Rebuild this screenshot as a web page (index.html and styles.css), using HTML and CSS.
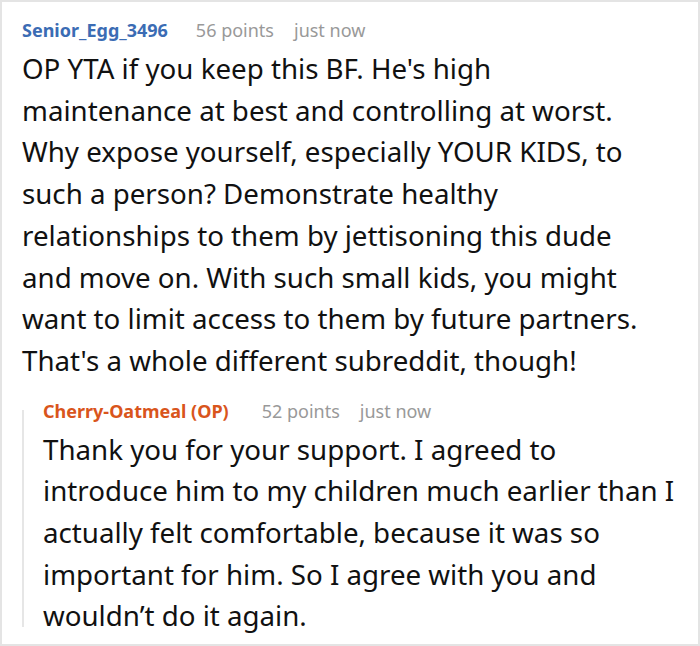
FILE: index.html
```html
<!DOCTYPE html>
<html lang="en">
<head>
    <meta charset="UTF-8">
    <meta name="viewport" content="width=device-width, initial-scale=1.0">
    <title>Comment thread</title>
    <link rel="stylesheet" href="styles.css">
</head>
<body>
<div class="thread">
    <div class="comment">
        <div class="comment-meta">
            <span class="author">Senior_Egg_3496</span>
            <span class="score">56 points</span>
            <span class="time">just now</span>
        </div>
        <p class="comment-body top-level">OP YTA if you keep this BF. He's high maintenance at best and controlling at worst. Why expose yourself, especially YOUR KIDS, to such a person? Demonstrate healthy relationships to them by jettisoning this dude and move on. With such small kids, you might want to limit access to them by future partners. That's a whole different subreddit, though!</p>

        <div class="replies">
            <div class="thread-line"></div>
            <div class="comment">
                <div class="comment-meta">
                    <span class="author op">Cherry-Oatmeal (OP)</span>
                    <span class="score">52 points</span>
                    <span class="time">just now</span>
                </div>
                <p class="comment-body">Thank you for your support. I agreed to introduce him to my children much earlier than I actually felt comfortable, because it was so important for him. So I agree with you and wouldn’t do it again.</p>
            </div>
        </div>
    </div>
</div>
</body>
</html>
```

FILE: styles.css
```css
body {
    margin: 0;
    font-family: "Noto Sans", "Open Sans", sans-serif;
    background-color: #ffffff;
    color: #111;
}

.thread {
    width: 700px;
    height: 646px;
    box-sizing: border-box;
    border: 2px solid #e4e4e4;
    padding: 15px 18px 0 20px;
}

.comment-meta {
    display: flex;
    gap: 20px;
    font-size: 18px;
    line-height: 26px;
    margin-bottom: 5px;
}

.author {
    font-weight: bold;
    color: #3b6cb4;
    margin-right: 8px;
}

.author.op {
    color: #d9551c;
    margin-right: 13px;
}

.score,
.time {
    color: #999;
}

.comment-body {
    margin: 0;
    font-size: 27.7px;
    line-height: 41.7px;
}

.comment-body.top-level {
    padding-right: 15px;
}

.replies {
    display: flex;
    gap: 19px;
    margin-top: 16px;
}

.thread-line {
    flex: 0 0 2px;
    background-color: #e6e6e6;
    margin: 12px 0 10px 0;
}
```
